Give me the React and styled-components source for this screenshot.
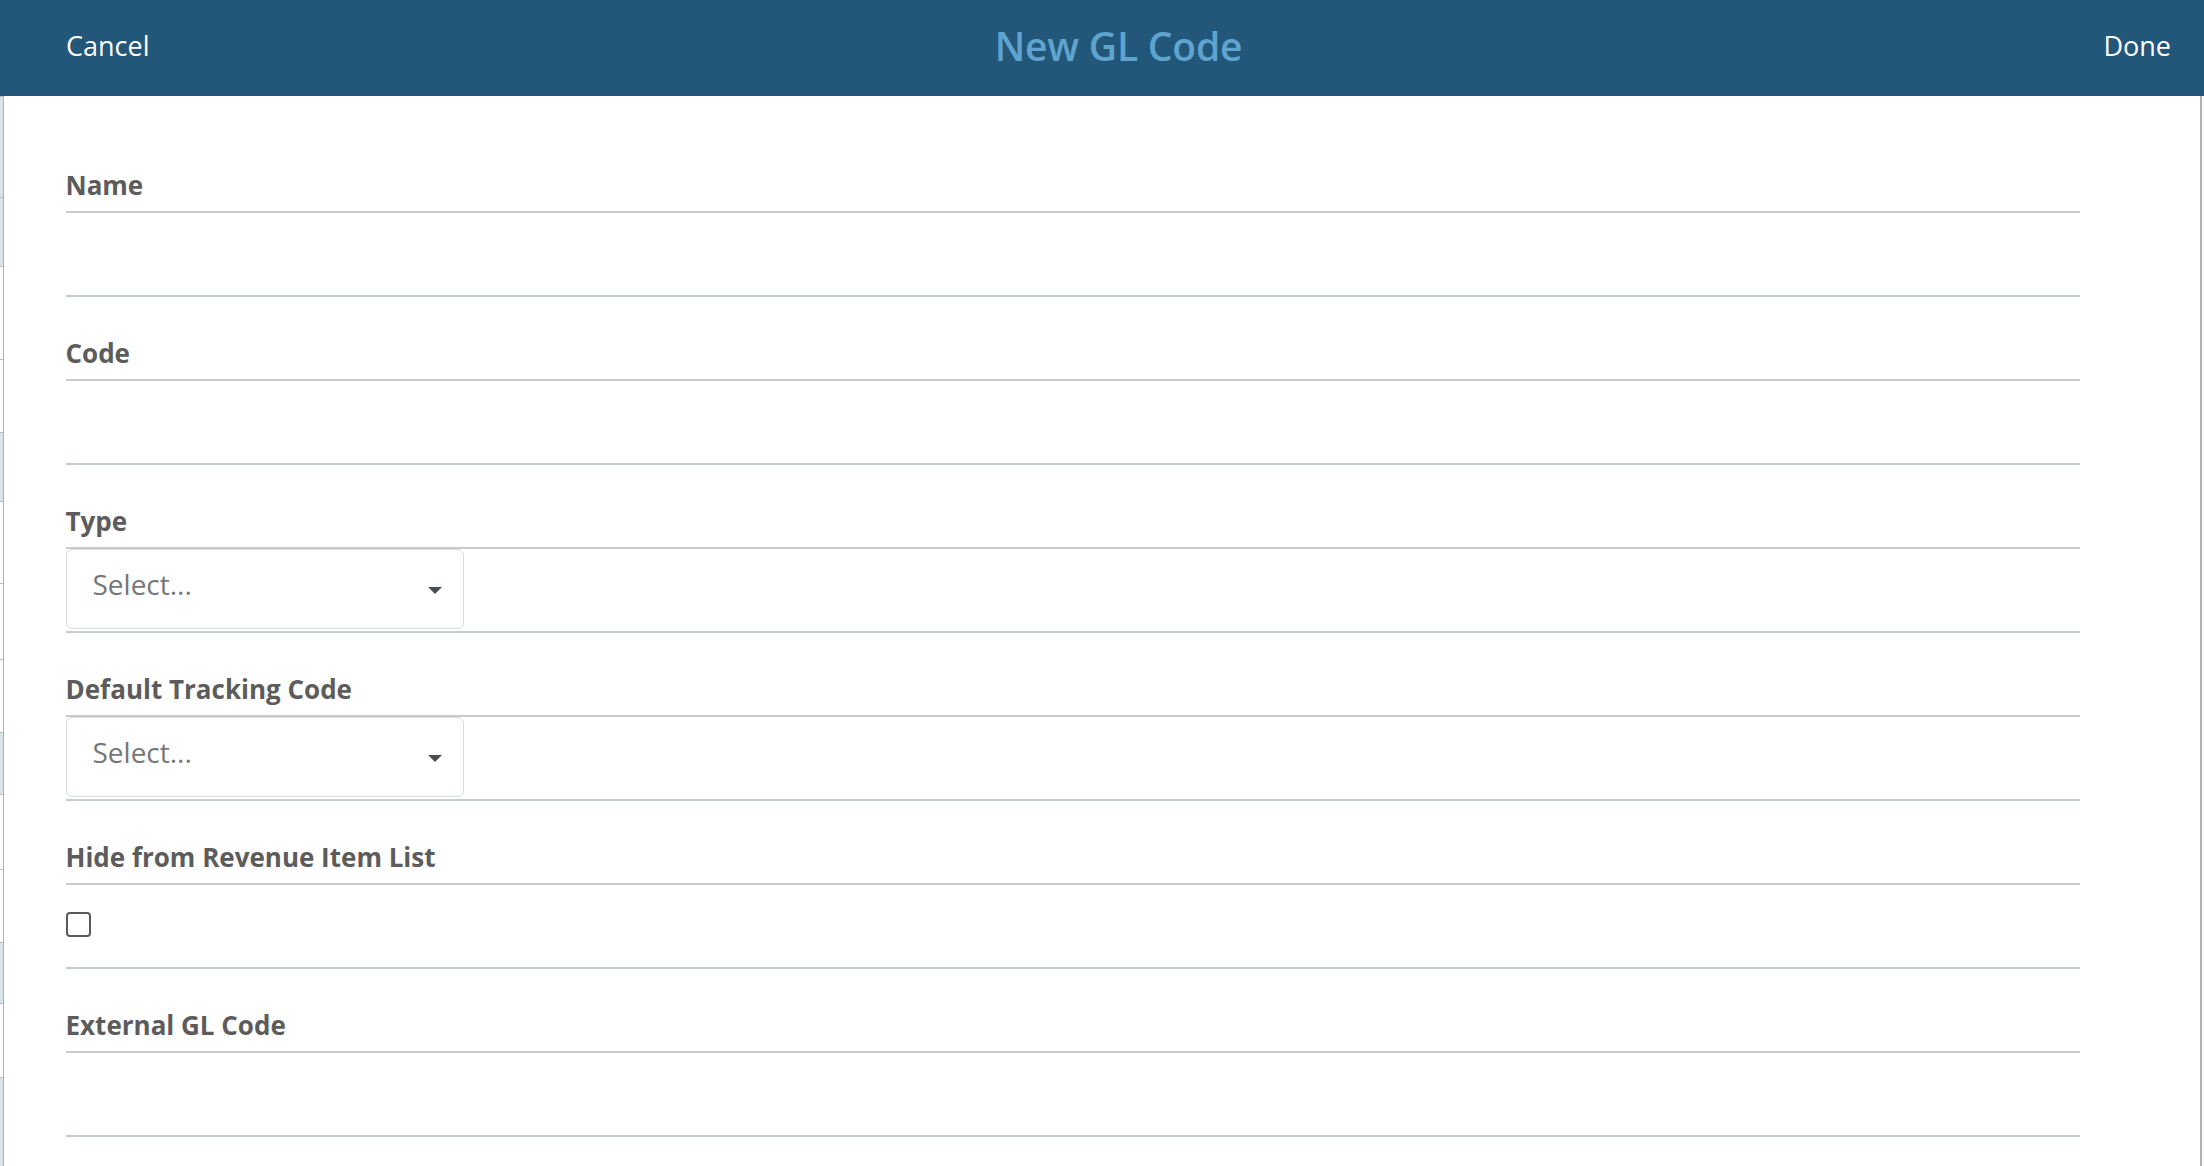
import styled, { createGlobalStyle } from "styled-components";

const GlobalStyle = createGlobalStyle`
  html, body {
    margin: 0;
    padding: 0;
    background: #ffffff;
  }
  body {
    font-family: "Open Sans", "Noto Sans", sans-serif;
  }
  * {
    box-sizing: border-box;
  }
`;

const backdropRows = [
  [101, "#d9e3e8"],
  [69, "#d9e3e8"],
  [93, "#ffffff"],
  [73, "#ffffff"],
  [69, "#d9e3e8"],
  [82, "#ffffff"],
  [76, "#ffffff"],
  [73, "#ffffff"],
  [62, "#d9e3e8"],
  [75, "#ffffff"],
  [73, "#ffffff"],
  [61, "#d9e3e8"],
  [74, "#ffffff"],
  [89, "#d9e3e8"],
];

const fields = [
  { label: "Name", kind: "text" },
  { label: "Code", kind: "text" },
  { label: "Type", kind: "select" },
  { label: "Default Tracking Code", kind: "select" },
  { label: "Hide from Revenue Item List", kind: "checkbox" },
  { label: "External GL Code", kind: "text" },
];

function Field({ label, kind }) {
  return (
    <FieldWrap>
      <LabelRow>
        <Label>{label}</Label>
      </LabelRow>
      <InputRow kind={kind}>
        {kind === "text" && <TextInput type="text" />}
        {kind === "select" && (
          <SelectBox>
            <Placeholder>Select...</Placeholder>
            <Caret />
          </SelectBox>
        )}
        {kind === "checkbox" && <CheckBox />}
      </InputRow>
    </FieldWrap>
  );
}

export default function App() {
  return (
    <Page>
      <GlobalStyle />
      <Header>
        <HeaderButton>Cancel</HeaderButton>
        <Title>New GL Code</Title>
        <HeaderButton align="right">Done</HeaderButton>
      </Header>
      <Body>
        <Backdrop>
          {backdropRows.map(([h, c], i) => (
            <BackdropRow key={i} bg={c} style={{ height: h }} />
          ))}
        </Backdrop>
        <Modal>
          <Form>
            {fields.map((f) => (
              <Field key={f.label} {...f} />
            ))}
          </Form>
        </Modal>
      </Body>
    </Page>
  );
}

const Page = styled.div`
  display: flex;
  flex-direction: column;
  min-height: 100vh;
  overflow: hidden;
`;

const Header = styled.header`
  height: 96px;
  background: #225779;
  display: grid;
  grid-template-columns: 1fr auto 1fr;
  align-items: center;
  padding: 0 33px 0 66px;
`;

const HeaderButton = styled.div`
  color: #ffffff;
  font-size: 27px;
  font-weight: 400;
  text-align: ${(p) => (p.align === "right" ? "right" : "left")};
  cursor: pointer;
  padding-bottom: 5px;
`;

const Title = styled.h1`
  margin: 0;
  padding-bottom: 5px;
  color: #5fa3cf;
  font-size: 39px;
  font-weight: 600;
  letter-spacing: -0.2px;
`;

const Body = styled.div`
  flex: 1;
  display: flex;
`;

const Backdrop = styled.div`
  width: 3px;
  display: flex;
  flex-direction: column;
`;

const BackdropRow = styled.div`
  flex: none;
  background: ${(p) => p.bg};
  border-top: 1px solid #b8bcbe;
`;

const Modal = styled.div`
  flex: 1;
  background: #ffffff;
  border-left: 1.5px solid #b0b0b0;
  border-right: 2px solid #b0b0b0;
  margin-right: 2px;
  padding: 32.5px 120px 0 61.5px;
`;

const Form = styled.form`
  display: flex;
  flex-direction: column;
`;

const FieldWrap = styled.div`
  display: flex;
  flex-direction: column;
`;

const LabelRow = styled.div`
  height: 84px;
  display: flex;
  align-items: flex-end;
  padding-bottom: 12px;
  border-bottom: 2px solid #c5cdcd;
`;

const Label = styled.label`
  font-size: 26px;
  line-height: 27px;
  font-weight: 700;
  color: #5c5c5c;
`;

const InputRow = styled.div`
  height: 84px;
  display: flex;
  align-items: flex-start;
  padding: ${(p) =>
    p.kind === "select" ? "0 0 2px" : p.kind === "checkbox" ? "27px 0 0" : "0"};
  border-bottom: 2px solid #c5cdcd;
`;

const TextInput = styled.input`
  width: 100%;
  height: 100%;
  border: none;
  outline: none;
  background: transparent;
  font-family: inherit;
  font-size: 26px;
  color: #444;
  padding: 0;
`;

const SelectBox = styled.div`
  width: 398px;
  height: 80px;
  border: 1px solid #d9dcdc;
  border-radius: 6px;
  display: flex;
  justify-content: space-between;
  align-items: center;
  padding: 0 21px 0 26px;
  cursor: pointer;
`;

const Placeholder = styled.span`
  align-self: flex-start;
  padding-top: 16px;
  font-size: 28px;
  line-height: 36px;
  color: #777777;
`;

const Caret = styled.span`
  width: 0;
  height: 0;
  margin-top: 4px;
  border-left: 7.5px solid transparent;
  border-right: 7.5px solid transparent;
  border-top: 7px solid #4a4f55;
`;

const CheckBox = styled.span`
  width: 25px;
  height: 25px;
  border: 2px solid #5a5a5a;
  border-radius: 4px;
  background: #ffffff;
`;
